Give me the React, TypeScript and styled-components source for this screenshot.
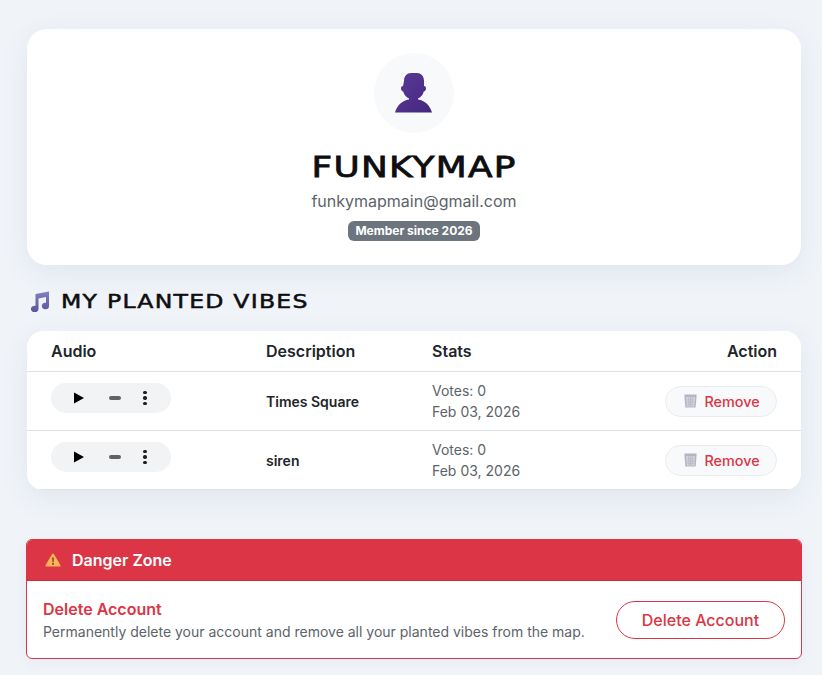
import React from 'react';
import styled, { createGlobalStyle } from 'styled-components';

const GlobalStyle = createGlobalStyle`
  html, body {
    margin: 0;
    padding: 0;
    background: #f0f4f9;
    font-family: Inter, "Liberation Sans", sans-serif;
    color: #212529;
    overflow: hidden;
  }
`;

const Page = styled.div`
  height: 675px;
  box-sizing: border-box;
  padding: 29px 21px 0 27px;
  display: flex;
  flex-direction: column;
`;

const ProfileCard = styled.section`
  height: 236px;
  box-sizing: border-box;
  padding-top: 24px;
  background: #fff;
  border-radius: 20px;
  box-shadow: 0 8px 30px rgba(30, 50, 90, 0.07);
  display: flex;
  flex-direction: column;
  align-items: center;
`;

const AvatarCircle = styled.div`
  width: 80px;
  height: 80px;
  border-radius: 50%;
  background: #f8f9fa;
  display: flex;
  align-items: center;
  justify-content: center;
`;

const Name = styled.h1`
  margin: 18px 0 0;
  height: 34px;
  font-family: "DejaVu Sans", sans-serif;
  font-size: 28px;
  line-height: 34px;
  font-weight: 400;
  letter-spacing: 1px;
  color: #0e0e10;
  -webkit-text-stroke: 0.8px #0e0e10;
  transform: scaleX(1.28);
`;

const Email = styled.p`
  margin: 4px 0 0;
  font-size: 16px;
  line-height: 24px;
  color: #5c636a;
`;

const Badge = styled.span`
  margin-top: 8px;
  height: 20px;
  padding: 0 7.5px;
  box-sizing: border-box;
  border-radius: 6px;
  background: #6c757d;
  color: #fff;
  font-size: 12px;
  font-weight: 700;
  line-height: 20px;
  white-space: nowrap;
`;

const SectionTitle = styled.h2`
  margin: 24px 0 0 2px;
  height: 24px;
  display: flex;
  align-items: center;
  gap: 11px;
  font-family: "DejaVu Sans", sans-serif;
  font-size: 19px;
  font-weight: 400;
  letter-spacing: 1px;
  color: #0e0e10;
`;

const TitleText = styled.span`
  display: inline-block;
  -webkit-text-stroke: 0.5px #0e0e10;
  transform: scaleX(1.24);
  transform-origin: left center;
`;

const TableCard = styled.section`
  margin-top: 18px;
  background: #fff;
  border-radius: 16px;
  overflow: hidden;
  box-shadow: 0 8px 30px rgba(30, 50, 90, 0.07);
`;

const Row = styled.div<{ $head?: boolean }>`
  display: grid;
  grid-template-columns: 215px 166px 1fr auto;
  align-items: center;
  padding: 0 24px;
  height: ${p => (p.$head ? '40px' : '58px')};
  border-bottom: 1px solid #dee2e6;
`;

const HeadCell = styled.div<{ $right?: boolean }>`
  font-size: 16px;
  font-weight: 600;
  color: #212529;
  text-align: ${p => (p.$right ? 'right' : 'left')};
`;

const Player = styled.div`
  width: 120px;
  height: 30px;
  margin-bottom: 6px;
  border-radius: 15px;
  background: #f1f3f4;
  display: flex;
  align-items: center;
  padding-left: 22px;
  box-sizing: border-box;
`;

const Description = styled.div`
  font-size: 14px;
  font-weight: 600;
  color: #212529;
  margin-top: 1px;
`;

const Stats = styled.div`
  font-size: 14px;
  line-height: 21px;
  color: #5c636a;
`;

const RemoveButton = styled.button`
  width: 112px;
  height: 31px;
  padding: 0 0 0 2px;
  display: flex;
  align-items: center;
  justify-content: center;
  gap: 7px;
  border: 1px solid #e9ecef;
  border-radius: 16px;
  background: #f8f9fa;
  color: #dc3545;
  font-family: inherit;
  font-size: 14.4px;
  font-weight: 500;
`;

const DangerCard = styled.section`
  margin: 49px -1px 0;
  height: 120px;
  box-sizing: border-box;
  border: 1px solid #dc3545;
  border-radius: 6px;
  background: #fff;
  overflow: hidden;
  box-shadow: 0 4px 14px rgba(30, 50, 90, 0.04);
`;

const DangerHeader = styled.div`
  height: 41px;
  box-sizing: border-box;
  padding: 0 0 1px 18px;
  background: #dc3545;
  border-bottom: 1px solid #c92f3e;
  color: #fff;
  display: flex;
  align-items: center;
  gap: 11px;
  font-size: 16px;
  font-weight: 600;
`;

const DangerBody = styled.div`
  display: flex;
  align-items: center;
  justify-content: space-between;
  padding: 18px 16px 0 16px;
`;

const DangerTitle = styled.div`
  font-size: 16px;
  line-height: 20px;
  font-weight: 600;
  color: #dc3545;
`;

const DangerText = styled.div`
  margin-top: 3px;
  font-size: 14px;
  line-height: 20px;
  color: #5c636a;
`;

const DeleteButton = styled.button`
  width: 169px;
  height: 38px;
  margin-bottom: 1px;
  padding: 0;
  border: 1px solid #dc3545;
  border-radius: 19px;
  background: #fff;
  color: #dc3545;
  font-family: inherit;
  font-size: 16px;
  font-weight: 500;
`;

const PersonIcon = () => (
  <svg width="40" height="40" viewBox="0 0 40 40">
    <defs>
      <linearGradient id="person" x1="0" y1="0" x2="1" y2="1">
        <stop offset="0" stopColor="#5b3a96" />
        <stop offset="1" stopColor="#43277f" />
      </linearGradient>
    </defs>
    <path
      fill="url(#person)"
      d="M10 8C10 3 13 0 17 0h6c4 0 7 3 7 8v5c1.500 0 2 1 2 2.500s-1 3-2.200 3c-.8 3.500-3.500 6-5.800 7v1c7 1 12 6 14 13H1c2-7 7-12 14-13v-1c-2.300-1-5-3.500-5.800-7-1.200 0-2.200-1.500-2.200-3s.5-2.500 2-2.500z"
    />
  </svg>
);

const NoteIcon = () => (
  <svg width="21" height="21" viewBox="0 0 21 21">
    <defs>
      <linearGradient id="note" x1="0" y1="0" x2="0" y2="1">
        <stop offset="0" stopColor="#8380bd" />
        <stop offset="1" stopColor="#5a5498" />
      </linearGradient>
    </defs>
    <path
      fill="url(#note)"
      d="M6.500 3 20 .5V15a3.600 3.300 0 1 1-3-3.200V6L9.500 7.400V18a3.800 3.300 0 1 1-3-3.200z"
    />
  </svg>
);

const PlayIcon = () => (
  <svg width="12" height="12" viewBox="0 0 12 12">
    <path fill="#000" d="M1 0.500 11 6 1 11.500z" />
  </svg>
);

const MuteBar = styled.span`
  margin-left: 24px;
  width: 12px;
  height: 4px;
  border-radius: 2px;
  background: #5f6368;
`;

const Dots = styled.span`
  margin-left: 22px;
  display: flex;
  flex-direction: column;
  gap: 2px;
`;

const Dot = styled.i`
  width: 3.500px;
  height: 3.500px;
  border-radius: 50%;
  background: #202124;
`;

const TrashIcon = () => (
  <svg width="13" height="14" viewBox="0 0 14 15">
    <path fill="#b4b4c4" d="M0.500 .5h13v2.500l-1 11.500H1.500L.5 3z" />
    <path fill="#dcdce4" d="M2.300 3.500h9.400l-.8 9.800H3.100z" />
    <path
      stroke="#b0b0c0"
      strokeWidth="0.7"
      fill="none"
      d="M3 5.500h8M3 7.500h8M3.200 9.500h7.600M3.300 11.500h7.400M5 3.500l.4 10M7 3.500v10M9 3.500l-.4 10"
    />
  </svg>
);

const WarningIcon = () => (
  <svg width="16" height="14" viewBox="0 0 18 16">
    <path
      fill="#ffb157"
      d="M9 .500c.5 0 .8.200 1 .6l7.600 13c.3.600 0 1.400-.8 1.400H1.200c-.8 0-1.100-.8-.8-1.400L8 1.100c.2-.4.500-.6 1-.6z"
    />
    <path fill="#4a3a2a" d="M8.200 5h1.600l-.2 5.500H8.400zM9 11.500a1 1 0 1 1 0 2 1 1 0 0 1 0-2z" />
  </svg>
);

const vibes = [
  { id: 1, name: 'Times Square' },
  { id: 2, name: 'siren' },
];

export default function App() {
  return (
    <Page>
      <GlobalStyle />
      <ProfileCard>
        <AvatarCircle>
          <PersonIcon />
        </AvatarCircle>
        <Name>FUNKYMAP</Name>
        <Email>funkymapmain@gmail.com</Email>
        <Badge>Member since 2026</Badge>
      </ProfileCard>

      <SectionTitle>
        <NoteIcon />
        <TitleText>MY PLANTED VIBES</TitleText>
      </SectionTitle>

      <TableCard>
        <Row $head>
          <HeadCell>Audio</HeadCell>
          <HeadCell>Description</HeadCell>
          <HeadCell>Stats</HeadCell>
          <HeadCell $right>Action</HeadCell>
        </Row>
        {vibes.map(v => (
          <Row key={v.id}>
            <Player>
              <PlayIcon />
              <MuteBar />
              <Dots>
                <Dot />
                <Dot />
                <Dot />
              </Dots>
            </Player>
            <Description>{v.name}</Description>
            <Stats>
              Votes: 0
              <br />
              Feb 03, 2026
            </Stats>
            <RemoveButton>
              <TrashIcon />
              Remove
            </RemoveButton>
          </Row>
        ))}
      </TableCard>

      <DangerCard>
        <DangerHeader>
          <WarningIcon />
          Danger Zone
        </DangerHeader>
        <DangerBody>
          <div>
            <DangerTitle>Delete Account</DangerTitle>
            <DangerText>Permanently delete your account and remove all your planted vibes from the map.</DangerText>
          </div>
          <DeleteButton>Delete Account</DeleteButton>
        </DangerBody>
      </DangerCard>
    </Page>
  );
}
